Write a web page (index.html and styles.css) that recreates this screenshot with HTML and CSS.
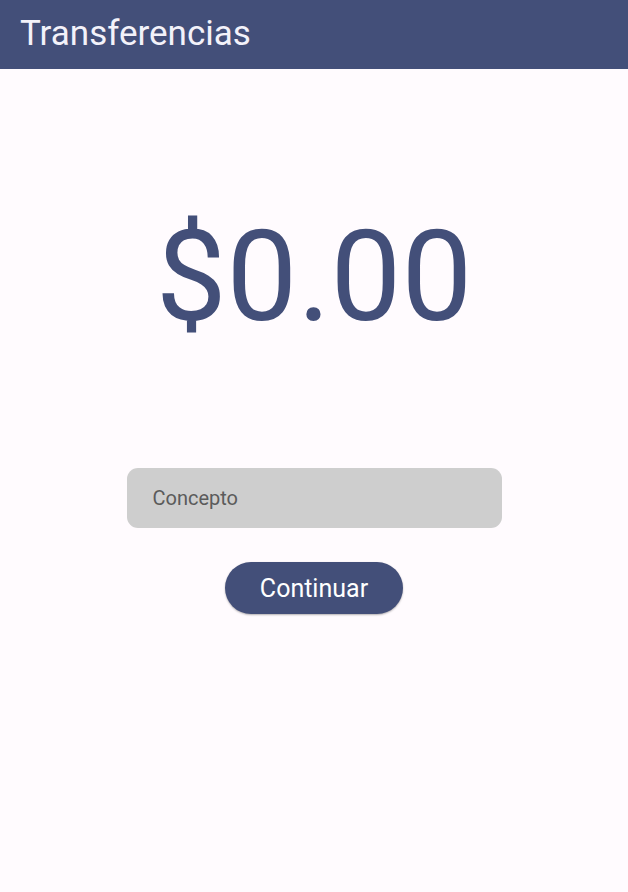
FILE: index.html
```html
<!DOCTYPE html>
<html lang="es">
<head>
<meta charset="utf-8">
<title>Transferencias</title>
<link rel="stylesheet" href="styles.css">
</head>
<body>
<header class="appbar">
  <h1 class="appbar-title">Transferencias</h1>
</header>
<main class="content">
  <div class="amount">$0.00</div>
  <div class="field">
    <input class="field-input" type="text" placeholder="Concepto">
  </div>
  <button class="btn" type="button">Continuar</button>
</main>
</body>
</html>
```

FILE: styles.css
```css
* { box-sizing: border-box; }
html, body {
  margin: 0;
  padding: 0;
  background: #fffbfe;
  font-family: Roboto, "Noto Sans", sans-serif;
}
body {
  width: 628px;
  height: 892px;
}
.appbar {
  height: 69px;
  background: #434f79;
  display: flex;
  align-items: center;
  padding: 0 20px;
}
.appbar-title {
  margin: 0;
  color: #f3f2fa;
  font-weight: 400;
  font-size: 35px;
  line-height: 1;
  padding-bottom: 2px;
}
.content {
  display: flex;
  flex-direction: column;
  align-items: center;
}
.amount {
  margin-top: 145px;
  font-size: 126px;
  line-height: 1;
  color: #434f79;
  font-weight: 400;
}
.field {
  margin-top: 128px;
  width: 375px;
  height: 60px;
  background: #cecece;
  border-radius: 11px;
  display: flex;
  align-items: center;
  padding: 0 26px;
}
.field-input {
  border: none;
  background: transparent;
  outline: none;
  width: 100%;
  font-family: Roboto, "Noto Sans", sans-serif;
  font-size: 20px;
  color: #333;
  padding: 0;
}
.field-input::placeholder {
  color: #5b5b5b;
}
.btn {
  margin-top: 34px;
  height: 52px;
  width: 178px;
  border: none;
  border-radius: 26px;
  background: #434f79;
  color: #ffffff;
  font-family: Roboto, "Noto Sans", sans-serif;
  font-size: 25px;
  box-shadow: 0 1px 2px rgba(0,0,0,0.3);
  padding: 0;
}
```
